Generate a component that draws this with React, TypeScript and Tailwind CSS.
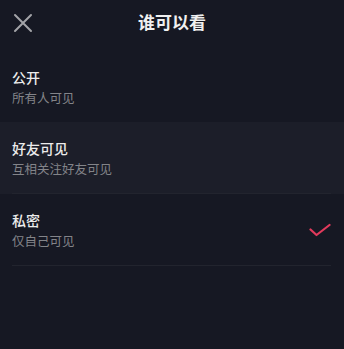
import React from 'react';

const OPTIONS = [
  { id: 'public', name: '公开', desc: '所有人可见' },
  { id: 'friends', name: '好友可见', desc: '互相关注好友可见' },
  { id: 'private', name: '私密', desc: '仅自己可见' },
];

export default function App() {
  const selected = 'private';
  const pressed = 'friends';

  return (
    <div
      className="w-[344px] h-[349px] bg-[#161823] text-[#ececec] overflow-hidden"
      style={{ fontFamily: '"Noto Sans CJK SC", "Noto Sans", sans-serif' }}
    >
      <header className="relative h-[44px] flex items-center justify-center">
        <button className="absolute left-[13px] top-[13px] w-[20px] h-[20px] text-[#a3a4a8]">
          <svg viewBox="0 0 20 20" className="w-full h-full" fill="none" stroke="currentColor" strokeWidth="2" strokeLinecap="round">
            <path d="M2 2 L18 18 M18 2 L2 18" />
          </svg>
        </button>
        <h1 className="text-[17px] font-bold text-[#f0f0f0]">谁可以看</h1>
      </header>

      <div className="mt-[6px]">
        {OPTIONS.map((opt) => (
          <div
            key={opt.id}
            className={`h-[72px] pl-3 pr-[13px] ${pressed === opt.id ? 'bg-[#1c1e29]' : ''}`}
          >
            <div
              className={`h-full flex items-center justify-between ${
                opt.id !== 'public' ? 'border-b border-[#22242e]' : ''
              }`}
            >
              <div className="flex flex-col gap-[2px] pt-[1px]">
                <p className="text-[14px] leading-[20px] font-medium text-[#ececec]">{opt.name}</p>
                <p className="text-[12.5px] leading-[18px] text-[#838489]">{opt.desc}</p>
              </div>
              {selected === opt.id && (
                <svg viewBox="0 0 22 14" className="w-[22px] h-[14px]" fill="none" stroke="#e23a5c" strokeWidth="2.2" strokeLinecap="round" strokeLinejoin="round">
                  <path d="M1.5 6.5 L7.5 12 L20.5 2" />
                </svg>
              )}
            </div>
          </div>
        ))}
      </div>
    </div>
  );
}
